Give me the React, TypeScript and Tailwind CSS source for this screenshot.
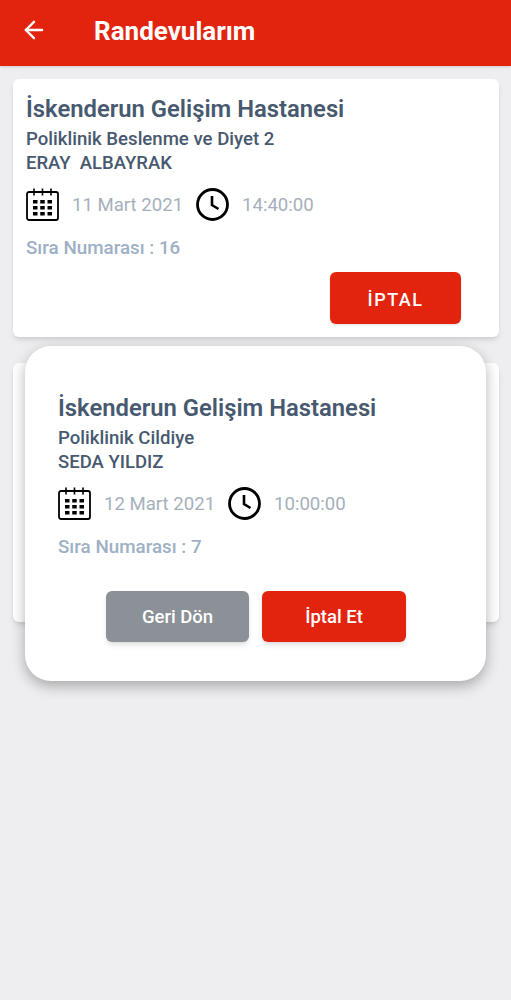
import { ArrowLeft } from 'lucide-react';

type Appointment = {
  department: string;
  doctor: string;
  date: string;
  time: string;
  queue: number;
};

function CalendarIcon() {
  return (
    <svg viewBox="0 0 33 33" className="w-[33px] h-[33px] shrink-0" fill="none">
      <rect x="1" y="4" width="31" height="28" rx="2" stroke="#000" strokeWidth="1.8" />
      <path d="M8 0.5v7M16.5 0.5v7M25 0.5v7" stroke="#000" strokeWidth="1.6" />
      <g fill="#000">
        <rect x="7" y="12" width="4.5" height="3.5" />
        <rect x="14.25" y="12" width="4.5" height="3.5" />
        <rect x="21.5" y="12" width="4.5" height="3.5" />
        <rect x="7" y="18" width="4.5" height="3.5" />
        <rect x="14.25" y="18" width="4.5" height="3.5" />
        <rect x="21.5" y="18" width="4.5" height="3.5" />
        <rect x="7" y="24" width="4.5" height="3.5" />
        <rect x="14.25" y="24" width="4.5" height="3.5" />
        <rect x="21.5" y="24" width="4.5" height="3.5" />
      </g>
    </svg>
  );
}

function ClockIcon() {
  return (
    <svg viewBox="0 0 33 33" className="w-[33px] h-[33px] shrink-0" fill="none">
      <circle cx="16.5" cy="16.5" r="15" stroke="#000" strokeWidth="2.8" />
      <path d="M16 8v9l6.5 4" stroke="#000" strokeWidth="2.6" />
    </svg>
  );
}

function Info({ item }: { item: Appointment }) {
  return (
    <div>
      <p className="text-[23.8px] leading-[30px] font-semibold text-[#47596f]">İskenderun Gelişim Hastanesi</p>
      <p className="mt-[3px] text-[18.6px] leading-[24px] font-medium text-[#47596f]">{item.department}</p>
      <p className="text-[18.5px] leading-[25px] font-medium text-[#47596f] whitespace-pre">{item.doctor}</p>
      <div className="flex items-center mt-[12px] h-[33px]">
        <CalendarIcon />
        <span className="ml-[13px] pt-[2px] w-[124px] text-[18.6px] text-[#a5b0bb] whitespace-nowrap">{item.date}</span>
        <ClockIcon />
        <span className="ml-[13px] pt-[2px] text-[18.6px] text-[#a5b0bb]">{item.time}</span>
      </div>
      <p className="mt-[15px] text-[18.8px] leading-[25px] font-medium text-[#9eb0c4]">Sıra Numarası : {item.queue}</p>
    </div>
  );
}

export default function App() {
  const first: Appointment = {
    department: 'Poliklinik Beslenme ve Diyet 2',
    doctor: 'ERAY  ALBAYRAK',
    date: '11 Mart 2021',
    time: '14:40:00',
    queue: 16,
  };
  const second: Appointment = {
    department: 'Poliklinik Cildiye',
    doctor: 'SEDA YILDIZ',
    date: '12 Mart 2021',
    time: '10:00:00',
    queue: 7,
  };

  return (
    <div className="relative w-[511px] h-[1000px] overflow-hidden bg-[#eeeef0] font-['Roboto',sans-serif]">
      {/* Header */}
      <div className="flex items-center h-[66px] bg-[#e2240e] shadow-sm text-white">
        <ArrowLeft className="w-[28px] h-[28px] ml-[20px] mb-[7px]" strokeWidth={2} />
        <h1 className="ml-[46px] mb-[4px] text-[26px] font-bold">Randevularım</h1>
      </div>

      {/* List */}
      <div className="flex flex-col gap-[26px] pt-[13px] pl-[13px] pr-[12px]">
        <div className="h-[258px] rounded-[6px] bg-white shadow-md px-[13px] pt-[15px]">
          <Info item={first} />
          <div className="flex justify-end mt-[11px] pr-[25px]">
            <button className="w-[131px] h-[52px] pt-[3px] rounded-[6px] bg-[#e2240e] shadow text-white text-[18px] font-medium tracking-[1.5px]">
              İPTAL
            </button>
          </div>
        </div>
        <div className="h-[259px] rounded-[6px] bg-white shadow-md" />
      </div>

      {/* Cancel dialog */}
      <div className="absolute left-[25px] top-[346px] w-[461px] h-[335px] rounded-[26px] bg-white shadow-[0_5px_14px_rgba(0,0,0,0.3)] px-[33px] pt-[47px]">
        <Info item={second} />
        <div className="flex justify-center gap-[13px] mt-[31px] pl-[1px]">
          <button className="w-[143px] h-[51px] pt-[3px] rounded-[6px] bg-[#8b9197] shadow-md text-white text-[18.5px] font-medium">
            Geri Dön
          </button>
          <button className="w-[144px] h-[51px] pt-[3px] rounded-[6px] bg-[#e2240e] shadow-md text-white text-[18.5px] font-medium">
            İptal Et
          </button>
        </div>
      </div>
    </div>
  );
}
